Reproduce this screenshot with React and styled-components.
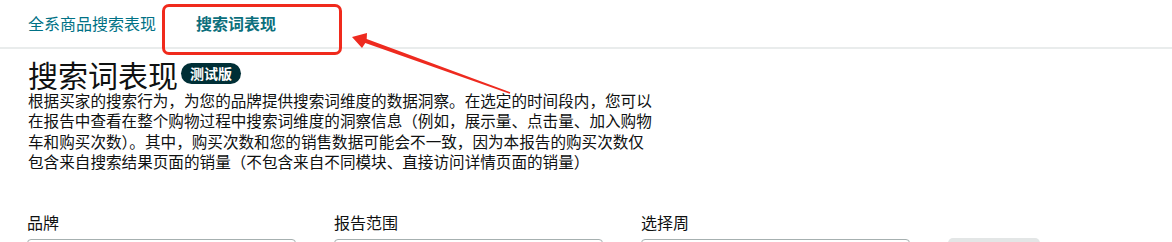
import React from 'react';
import styled, { createGlobalStyle } from 'styled-components';

const GlobalStyle = createGlobalStyle`
  * {
    box-sizing: border-box;
  }

  body {
    margin: 0;
    background: #ffffff;
    font-family: "Noto Sans CJK SC", "Noto Sans", sans-serif;
    color: #0f1111;
  }
`;

const TABS = ['全系商品搜索表现', '搜索词表现'];

const DESCRIPTION = [
  '根据买家的搜索行为，为您的品牌提供搜索词维度的数据洞察。在选定的时间段内，您可以',
  '在报告中查看在整个购物过程中搜索词维度的洞察信息（例如，展示量、点击量、加入购物',
  '车和购买次数）。其中，购买次数和您的销售数据可能会不一致，因为本报告的购买次数仅',
  '包含来自搜索结果页面的销量（不包含来自不同模块、直接访问详情页面的销量）',
];

const FIELDS = ['品牌', '报告范围', '选择周'];

function App() {
  return (
    <Root>
      <GlobalStyle />
      <TabBar>
        {TABS.map((tab, index) => (
          <Tab key={tab} active={index === 1}>
            {tab}
          </Tab>
        ))}
      </TabBar>

      <Page>
        <TitleRow>
          <Title>搜索词表现</Title>
          <Badge>测试版</Badge>
        </TitleRow>
        <Description>
          {DESCRIPTION.map((line, index) => (
            <Line key={index}>{line}</Line>
          ))}
        </Description>

        <Form>
          {FIELDS.map(field => (
            <Field key={field}>
              <Label>{field}</Label>
              <Select />
            </Field>
          ))}
          <ApplyButton />
        </Form>
      </Page>

      {/* annotation drawn over the screenshot */}
      <Highlight />
      <Arrow viewBox="0 0 1172 242" width="1172" height="242">
        <polygon
          points="352,37 367,33 366.7,39.1 510.3,92.2 509.7,93.8 365.3,42.9 362,48"
          fill="#ee2a1f"
        />
      </Arrow>
    </Root>
  );
}

const Root = styled.div`
  position: relative;
  width: 1172px;
  height: 242px;
  overflow: hidden;
`;

const TabBar = styled.div`
  display: flex;
  align-items: center;
  gap: 40px;
  height: 49px;
  padding: 0 28px 2px;
  border-bottom: 2px solid #e9ecec;
`;

const Tab = styled.div`
  font-size: 16px;
  line-height: 22px;
  color: ${props => (props.active ? '#0b6f7c' : '#007185')};
  font-weight: ${props => (props.active ? 700 : 400)};
  cursor: pointer;
`;

const Page = styled.div`
  padding: 0 28px;
`;

const TitleRow = styled.div`
  display: flex;
  align-items: center;
  gap: 3px;
  margin-top: 10px;
  height: 30px;
`;

const Title = styled.h1`
  margin: 0;
  font-size: 30px;
  line-height: 30px;
  font-weight: 400;
  color: #0f1111;
`;

const Badge = styled.span`
  display: inline-flex;
  align-items: center;
  height: 21px;
  padding: 0 9px;
  border-radius: 11px;
  background: #002f36;
  color: #ffffff;
  font-size: 14px;
  font-weight: 700;
  margin-top: -2px;
`;

const Description = styled.div`
  display: flex;
  flex-direction: column;
  margin-top: 1px;
`;

const Line = styled.p`
  margin: 0;
  height: 20.3px;
  font-size: 15.6px;
  line-height: 20px;
  color: #0f1111;
  white-space: nowrap;
`;

const Form = styled.div`
  display: grid;
  grid-template-columns: repeat(3, 269px) 92px;
  column-gap: 38px;
  align-items: end;
  margin-top: 41px;
  margin-left: -1px;
`;

const Field = styled.div`
  display: flex;
  flex-direction: column;
  gap: 7px;
`;

const Label = styled.label`
  font-size: 16px;
  line-height: 20px;
  color: #0f1111;
`;

const Select = styled.div`
  height: 36px;
  border: 1px solid #a6b0b0;
  border-radius: 4px;
  background: #ffffff;
`;

const ApplyButton = styled.div`
  height: 37px;
  border-radius: 5px;
  background: #e3e6e6;
`;

const Highlight = styled.div`
  position: absolute;
  left: 162px;
  top: 4px;
  width: 180px;
  height: 51px;
  border: 3px solid #f02a1c;
  border-radius: 7px;
  pointer-events: none;
`;

const Arrow = styled.svg`
  position: absolute;
  left: 0;
  top: 0;
  pointer-events: none;
`;

export default App;
